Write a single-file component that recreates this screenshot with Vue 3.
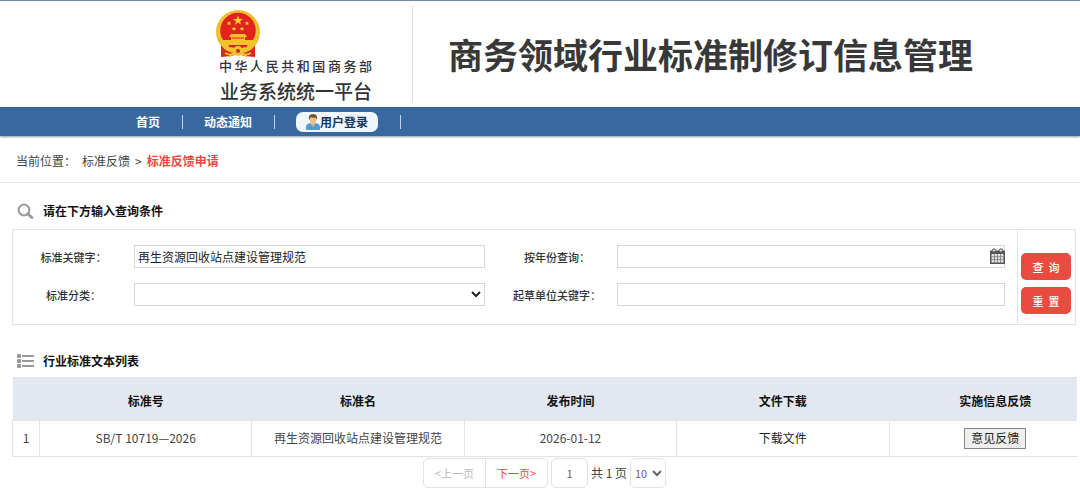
<script setup>
import { ref } from 'vue'

const keyword = ref('再生资源回收站点建设管理规范')
const category = ref('')
const year = ref('')
const drafter = ref('')
const page = ref('1')
const pageSize = ref('10')

const columns = ['标准号', '标准名', '发布时间', '文件下载', '实施信息反馈']
const rows = [
  { code: 'SB/T 10719—2026', name: '再生资源回收站点建设管理规范', date: '2026-01-12' }
]

function reset() {
  keyword.value = ''
  category.value = ''
  year.value = ''
  drafter.value = ''
}
</script>

<template>
  <div class="page">
    <header class="banner">
      <div class="brand">
        <svg class="emblem" viewBox="0 0 44 48" aria-hidden="true">
          <circle cx="22" cy="22" r="22" fill="#f2c230" />
          <circle cx="22" cy="22" r="20.6" fill="none" stroke="#e8a92c" stroke-width="1" stroke-dasharray="2 2" />
          <path d="M5 34 L39 34 L39 47 L28 46 L22 43 L16 46 L5 47Z" fill="#dc2420" />
          <path d="M2 30 Q7 42 18 43 L22 40 L26 43 Q37 42 42 30 L36 28 L8 28Z" fill="#f2c230" />
          <circle cx="22" cy="20.500" r="17.800" fill="#e2231d" />
          <path d="M22 5.500l1.300 3.500h3.700l-3 2.200 1.100 3.600-3.100-2.200-3.100 2.200 1.100-3.600-3-2.200h3.700z" fill="#fad42c" />
          <g fill="#fad42c">
            <path d="M13 11l.7 1.500 1.600.1-1.200 1 .4 1.600-1.500-.9-1.500.9.4-1.600-1.200-1 1.600-.1z" />
            <path d="M31 11l.7 1.500 1.600.1-1.200 1 .4 1.600-1.500-.9-1.500.9.4-1.600-1.200-1 1.600-.1z" />
            <path d="M18 16.500l.7 1.500 1.600.1-1.200 1 .4 1.600-1.500-.9-1.500.9.4-1.600-1.200-1 1.600-.1z" />
            <path d="M26 16.500l.7 1.500 1.600.1-1.200 1 .4 1.600-1.500-.9-1.500.9.4-1.600-1.200-1 1.600-.1z" />
          </g>
          <path d="M15 24h14l2 3h-2v3h8v5H7v-5h8v-3h-2z" fill="#f6c22c" />
          <path d="M16 28h12" stroke="#e2231d" stroke-width="1" />
          <path d="M13 36.500h18" stroke="#e2231d" stroke-width="1.400" />
          <circle cx="22" cy="41" r="5" fill="#f2c230" />
          <circle cx="22" cy="41" r="2" fill="#dc2420" />
          <path d="M9 43q5 3 9 0M26 43q4 3 9 0M13 47q3-4 6-2M31 47q-3-4-6-2" fill="none" stroke="#f2c230" stroke-width="1.600" />
        </svg>
        <span class="ministry">中华人民共和国商务部</span>
        <span class="platform">业务系统统一平台</span>
      </div>
      <h1>商务领域行业标准制修订信息管理</h1>
    </header>

    <nav class="nav">
      <span class="nav-item"><a href="#">首页</a></span>
      <span class="nav-item"><a href="#">动态通知</a></span>
      <span class="nav-item">
        <a class="login" href="#">
          <svg viewBox="0 0 14 16" width="14" height="16" aria-hidden="true">
            <path d="M0 16v-3q0-3 4-4l3 2 3-2q4 1 4 4v3z" fill="#4f9bd3" />
            <path d="M4.500 9.500L7 13l2.500-3.500-.5-2H5z" fill="#e6b47e" />
            <ellipse cx="7" cy="5.500" rx="3.300" ry="4" fill="#efbd85" />
            <path d="M3 6Q1.800 0 7 0t4 6l-1-2.500q-3 .8-5-.5z" fill="#76502d" />
          </svg>
          <span>用户登录</span>
        </a>
      </span>
    </nav>

    <div class="crumbs">
      <span>当前位置：</span>
      <span class="trail"><span>标准反馈</span><span>&gt;</span><a href="#">标准反馈申请</a></span>
    </div>

    <main>
      <h2 class="search-title">
        <svg viewBox="0 0 18 16" width="18" height="16" aria-hidden="true">
          <circle cx="7" cy="7" r="5.400" fill="none" stroke="#999" stroke-width="2" />
          <path d="M10.800 10.800l4 3.800" stroke="#999" stroke-width="2.800" stroke-linecap="round" />
        </svg>
        请在下方输入查询条件
      </h2>

      <form class="filter" @submit.prevent>
        <div class="fields">
          <label for="keyword">标准关键字：</label>
          <input id="keyword" v-model="keyword" class="control" type="text" />
          <label class="second" for="year">按年份查询：</label>
          <div class="date">
            <input id="year" v-model="year" class="control" type="text" />
            <button type="button" class="calendar" aria-label="选择年份">
              <svg viewBox="0 0 15 16" width="15" height="16" aria-hidden="true">
                <path d="M0 2.500h15V16H0z" fill="#555" />
                <path d="M1.500 6h12v8.500h-12z" fill="#e4e4e4" />
                <path d="M1 8.800h13M1 11.600h13M4.500 6v9M7.500 6v9M10.500 6v9" stroke="#777" stroke-width=".8" />
                <circle cx="4" cy="2.500" r="1.700" fill="#ddd" stroke="#555" />
                <circle cx="11" cy="2.500" r="1.700" fill="#ddd" stroke="#555" />
              </svg>
            </button>
          </div>
          <label for="category">标准分类：</label>
          <select id="category" v-model="category" class="control">
            <option value=""></option>
          </select>
          <label class="second" for="drafter">起草单位关键字：</label>
          <input id="drafter" v-model="drafter" class="control" type="text" />
        </div>
        <div class="actions">
          <button type="submit">查&nbsp;&nbsp;询</button>
          <button type="button" @click="reset">重&nbsp;&nbsp;置</button>
        </div>
      </form>

      <h2 class="list-title">
        <svg viewBox="0 0 18 16" width="18" height="16" aria-hidden="true">
          <g fill="#999">
            <rect y="1" width="4" height="4" rx="1" />
            <rect y="6" width="4" height="4" rx="1" />
            <rect y="11" width="4" height="4" rx="1" />
            <rect x="5" y="2" width="12" height="2" />
            <rect x="5" y="7" width="12" height="2" />
            <rect x="5" y="12" width="12" height="2" />
          </g>
        </svg>
        行业标准文本列表
      </h2>

      <div class="table-wrap">
        <table>
          <colgroup>
            <col class="index-col" />
            <col v-for="c in columns" :key="c" />
          </colgroup>
          <thead>
            <tr>
              <th></th>
              <th v-for="c in columns" :key="c" scope="col">{{ c }}</th>
            </tr>
          </thead>
          <tbody>
            <tr v-for="(r, i) in rows" :key="r.code">
              <td>{{ i + 1 }}</td>
              <td>{{ r.code }}</td>
              <td>{{ r.name }}</td>
              <td>{{ r.date }}</td>
              <td><a href="#">下载文件</a></td>
              <td><button type="button" class="feedback">意见反馈</button></td>
            </tr>
          </tbody>
        </table>
      </div>

      <div class="pager">
        <div class="steps">
          <button type="button" disabled>&lt;上一页</button>
          <button type="button" class="next">下一页&gt;</button>
        </div>
        <input v-model="page" type="text" aria-label="页码" />
        <span>共 1 页</span>
        <select v-model="pageSize" aria-label="每页条数">
          <option>10</option>
          <option>20</option>
          <option>50</option>
        </select>
      </div>
    </main>
  </div>
</template>

<style>
body {
  margin: 0;
  background: #fff;
}
</style>

<style scoped>
.page {
  font-family: "Noto Sans CJK SC", sans-serif;
  font-size: 12px;
  line-height: 18px;
  color: #444;
  border-top: 1px solid #6f8cae;
  overflow: hidden;
}
.page * {
  box-sizing: border-box;
}
a {
  color: inherit;
  text-decoration: none;
}
button,
input,
select {
  font-family: inherit;
  margin: 0;
}
h1,
h2 {
  margin: 0;
}

.banner {
  display: flex;
  align-items: center;
  height: 106px;
  padding-left: 216px;
}
.brand {
  display: flex;
  flex-direction: column;
  width: 197px;
  height: 96px;
  padding: 4px 40px 0 0;
  border-right: 1px solid #ddd;
  white-space: nowrap;
  color: #333;
}
.emblem {
  width: 44px;
  height: 48px;
  flex: none;
}
.ministry {
  padding-left: 3px;
  font-size: 13px;
  font-weight: 500;
  line-height: 16px;
  text-align-last: justify;
}
.platform {
  margin-top: 4px;
  padding-left: 4px;
  font-size: 19px;
  font-weight: 500;
  line-height: 26px;
}
h1 {
  padding-left: 35px;
  font-size: 35px;
  line-height: 52px;
  font-weight: 700;
  color: #383838;
  white-space: nowrap;
}

.nav {
  display: flex;
  align-items: center;
  height: 29px;
  padding-left: 115px;
  background: #3769a0;
  box-shadow: 0 1px 2px #8c9aa8;
  color: #fff;
  font-weight: 700;
}
.nav-item {
  display: flex;
  align-items: center;
  height: 14px;
  padding: 0 22px 0 21px;
  border-right: 1px solid #c4d3e4;
}
.login {
  display: flex;
  align-items: center;
  height: 20px;
  padding: 0 10px;
  border-radius: 7px;
  background: #eff6fc;
  color: #17365d;
}

.crumbs {
  display: flex;
  gap: 6px;
  padding: 16px 16px 12px;
  border-bottom: 1px solid #e4e4e4;
}
.trail {
  display: flex;
  gap: 5px;
}
.trail a {
  color: #e8493e;
  font-weight: 700;
}

main {
  padding: 0 3px 0 12px;
}
h2 {
  display: flex;
  align-items: center;
  gap: 8px;
  padding-left: 5px;
  font-size: 12px;
  line-height: 18px;
  font-weight: 700;
  color: #111;
}
.search-title {
  padding-top: 19px;
  padding-bottom: 9px;
}
.list-title {
  padding-top: 27px;
  padding-bottom: 7px;
}

.filter {
  display: flex;
  margin-right: 1px;
  border: 1px solid #e2e2e2;
}
.fields {
  flex: 1;
  display: grid;
  grid-template-columns: 121px 351fr 132px 388fr;
  row-gap: 15px;
  align-items: center;
  padding: 15px 12px 18px 0;
}
label {
  text-align: center;
  font-size: 11px;
  font-weight: 500;
  line-height: 16px;
  color: #333;
}
.second {
  padding-left: 12px;
}
.control {
  display: block;
  width: 100%;
  height: 23px;
  padding: 0 3px;
  border: 1px solid #d6d6d6;
  border-radius: 0;
  background: #fff;
  color: #222;
  font-size: 12px;
}
select.control {
  padding: 0;
}
.date {
  position: relative;
}
.calendar {
  position: absolute;
  top: 3px;
  right: 0;
  display: flex;
  padding: 0;
  border: 0;
  background: none;
}
.actions {
  display: flex;
  flex-direction: column;
  justify-content: center;
  gap: 7px;
  width: 58px;
  padding: 13px 4px 0 3px;
  border-left: 1px solid #e2e2e2;
}
.actions button {
  height: 27px;
  padding: 0;
  border: 0;
  border-radius: 5px;
  background: #ea4b40;
  color: #fff;
  font-size: 11px;
  font-weight: 500;
}

.table-wrap {
  overflow: hidden;
}
table {
  width: calc(100% + 25px);
  table-layout: fixed;
  border-collapse: collapse;
  text-align: center;
}
.index-col {
  width: 27px;
}
th {
  height: 43px;
  padding: 5px 0 0;
  background: #e3e7f0;
  color: #111;
  font-weight: 700;
}
td {
  height: 36px;
  padding: 0;
  border: 1px solid #e2e2e2;
}
td a {
  color: #222;
}
.feedback {
  height: 21px;
  padding: 0 6px;
  border: 1px solid #858585;
  border-radius: 0;
  background: #efefef;
  color: #222;
  font-size: 12px;
  line-height: 18px;
}

.pager {
  display: flex;
  justify-content: center;
  align-items: center;
  gap: 3px;
  padding-top: 1px;
}
.pager button,
.pager input,
.pager select {
  height: 30px;
  padding: 0;
  border: 1px solid #e2e2e2;
  border-radius: 5px;
  background: #fff;
  color: #666;
  font-size: 11px;
}
.steps {
  display: flex;
}
.pager button {
  width: 63px;
}
.pager button:disabled {
  border-radius: 5px 0 0 5px;
  color: #bbb;
}
.pager .next {
  margin-left: -1px;
  border-radius: 0 5px 5px 0;
  color: #e8493e;
}
.pager input {
  width: 37px;
  text-align: center;
}
.pager select {
  width: 36px;
}
</style>
